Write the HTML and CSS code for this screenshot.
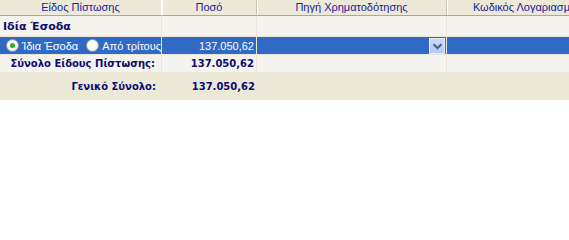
FILE: index.html
```html
<!DOCTYPE html>
<html>
<head>
<meta charset="utf-8">
<link rel="stylesheet" href="styles.css">
</head>
<body>
<div class="grid">
  <table class="tbl">
    <colgroup><col class="c1"><col class="c2"><col class="c3"><col class="c4"></colgroup>
    <thead>
      <tr><th class="first">Είδος Πίστωσης</th><th>Ποσό</th><th>Πηγή Χρηματοδότησης</th><th>Κωδικός Λογαριασμού</th></tr>
    </thead>
    <tbody>
      <tr class="group"><td class="gtitle">Ιδία Έσοδα</td><td></td><td></td><td></td></tr>
      <tr class="sel">
        <td class="radios"><span class="radio on"></span><span class="rlabel">Ίδια Έσοδα</span><span class="radio"></span><span class="rlabel">Από τρίτους</span></td>
        <td class="num">137.050,62</td>
        <td class="combo"><span class="dd"><svg width="11" height="7" viewBox="0 0 11 7"><path d="M1.5 1.2 L5.5 5 L9.5 1.2" fill="none" stroke="#4d6185" stroke-width="2.2"/></svg></span></td>
        <td></td>
      </tr>
      <tr class="sub"><td class="lbl">Σύνολο Είδους Πίστωσης:</td><td class="num b">137.050,62</td><td></td><td></td></tr>
      <tr class="total"><td class="lbl">Γενικό Σύνολο:</td><td class="num b">137.050,62</td><td></td><td></td></tr>
    </tbody>
  </table>
</div>
</body>
</html>
```

FILE: styles.css
```css
html, body { margin: 0; padding: 0; background: #ffffff; }
.grid { width: 569px; overflow: hidden; }
.tbl {
  width: 609px;
  table-layout: fixed;
  border-collapse: separate;
  border-spacing: 0;
  font-family: "Liberation Sans", Arial, sans-serif;
  font-size: 11px;
}
.c1 { width: 162px; }
.c2 { width: 95px; }
.c3 { width: 190px; }
.c4 { width: 162px; }
th {
  height: 15px;
  padding: 0;
  background: #ece9d8;
  color: #1a1a9c;
  font-weight: normal;
  text-align: center;
  white-space: nowrap;
  overflow: hidden;
  border-bottom: 1px solid #aca899;
  border-right: 1px solid #c8c5b4;
  box-shadow: inset 1px 0 0 #ffffff;
  line-height: 15px;
}
th.first { box-shadow: none; border-right: 1px solid #ffffff; }
td {
  padding: 0;
  white-space: nowrap;
  overflow: hidden;
  border-right: 1px solid #e9e6d9;
  border-bottom: 1px solid #e9e6d9;
  background: #f4f3ee;
}
tr.group td { height: 20px; }
.gtitle {
  font-family: "DejaVu Sans", sans-serif;
  font-weight: bold;
  font-size: 11px;
  color: #0b0b6e;
  padding-left: 3px;
}
tr.sel td { height: 17px; background: #316ac5; color: #ffffff; }
tr.sel td:last-child { border-right: none; }
td.radios { padding-left: 6px; }
.radio {
  display: inline-block;
  vertical-align: middle;
  width: 11px;
  height: 11px;
  border-radius: 50%;
  border: 1px solid #9c9c9c;
  background: radial-gradient(circle at 40% 40%, #ffffff 40%, #dcdcd4 100%);
  position: relative;
  margin-right: 3px;
}
.radio.on::after {
  content: "";
  position: absolute;
  left: 3px; top: 3px;
  width: 5px; height: 5px;
  border-radius: 50%;
  background: #2fae2f;
}
.rlabel { vertical-align: middle; margin-right: 8px; }
.num { text-align: right; padding-right: 2px; }
.b {
  font-family: "DejaVu Sans", sans-serif;
  font-weight: bold;
  font-size: 10px;
  color: #0b0b6e;
}
.lbl {
  text-align: right;
  padding-right: 6px;
  font-family: "DejaVu Sans", sans-serif;
  font-weight: bold;
  font-size: 10px;
  color: #0b0b6e;
}
tr.sub td { height: 17px; }
tr.total td { height: 27px; background: #ece9d8; border-right: none; border-bottom: none; }
td.combo { text-align: right; padding-right: 1px; }
.dd {
  display: inline-block;
  vertical-align: middle;
  width: 14px;
  height: 14px;
  border: 1px solid #e6eefc;
  background: linear-gradient(#c8d8fd, #b5c9f7);
  text-align: center;
  line-height: 14px;
}
.dd svg { vertical-align: middle; }
```
